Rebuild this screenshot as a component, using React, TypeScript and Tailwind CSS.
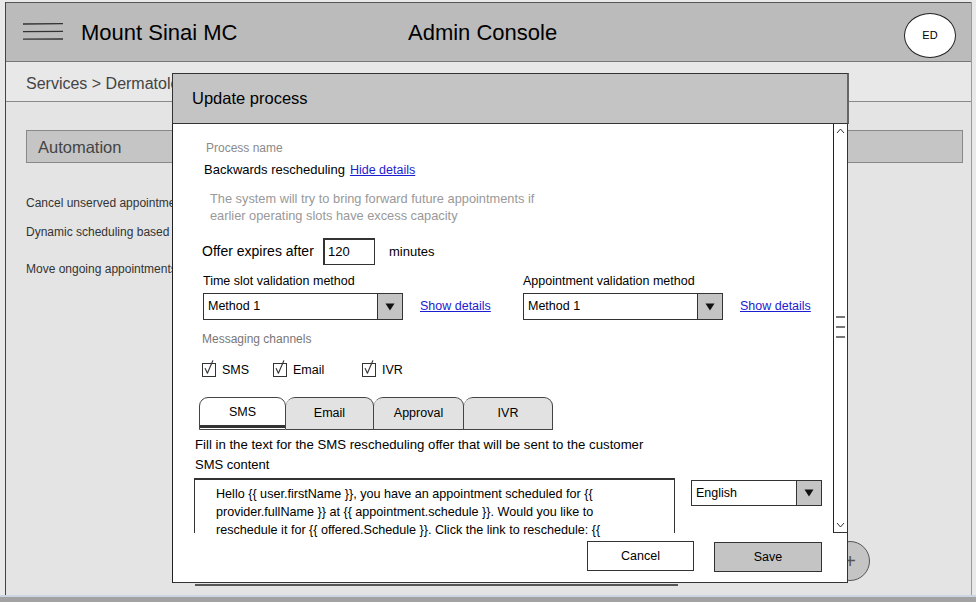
import React from "react";

const Check = () => (
  <svg width="14" height="14" viewBox="0 0 14 14" style={{ overflow: "visible" }} className="shrink-0">
    <rect x="0.5" y="0.5" width="13" height="13" fill="white" stroke="#333" strokeWidth="1" />
    <path d="M3.2 5.5 L5.4 10.2 L10.8 -2.2" fill="none" stroke="#333" strokeWidth="1.1" strokeLinecap="round" strokeLinejoin="round" />
  </svg>
);

const Arrow = () => (
  <svg width="10" height="8" viewBox="0 0 10 8">
    <polygon points="0.5,0.5 9.5,0.5 5,7.5" fill="#111" />
  </svg>
);

export default function App() {
  return (
    <div className="relative w-[976px] h-[602px] overflow-hidden bg-[#e9e9e9] font-[Liberation_Sans,Arial,sans-serif] text-[#222]">
      {/* Frame */}
      <div className="ml-[5px] mt-[2px] w-[967px] h-[593px] flex flex-col border-l border-l-[#444] border-r border-r-[#999]">
        {/* Header */}
        <div className="h-[60px] shrink-0 bg-[#bbbbbb] border-t border-t-[#555] border-b border-b-[#777] flex items-center">
          <svg width="42" height="20" viewBox="0 0 42 20" className="ml-[16px] shrink-0">
            <path d="M1 2 L41 1.6" stroke="#333" strokeWidth="1.3" />
            <path d="M1 9.6 L41 9.4" stroke="#333" strokeWidth="1.3" />
            <path d="M1 17.2 L41 17" stroke="#333" strokeWidth="1.3" />
          </svg>
          <span className="ml-[17px] w-[327px] text-[22px] text-black">Mount Sinai MC</span>
          <span className="text-[22px] text-black">Admin Console</span>
          <div className="ml-auto mr-[15px] self-start mt-[10px] w-[52px] h-[45px] rounded-[50%] bg-white border border-[#222] flex items-center justify-center text-[11px] text-black">
            ED
          </div>
        </div>
        {/* Breadcrumb */}
        <div className="h-[40px] shrink-0 bg-[#e8e8e8] border-b border-b-[#8a8a8a] flex items-center pl-[20px] pt-[5px] text-[16px] text-[#444]">
          Services &gt; Dermatology
        </div>
        {/* Content */}
        <div className="flex-1 bg-[#e4e4e4] pt-[28px] pl-[20px] pr-[8px]">
          <div className="h-[33px] bg-[#c5c5c5] border border-[#888] flex items-center pl-[11px] pt-[2px] text-[16.5px] text-[#444]">
            Automation
          </div>
          <div className="mt-[32px] h-[16px] leading-[16px] text-[12px] text-[#333]">Cancel unserved appointments</div>
          <div className="mt-[13px] h-[16px] leading-[16px] text-[12px] text-[#333]">Dynamic scheduling based on capacity</div>
          <div className="mt-[21px] h-[16px] leading-[16px] text-[12px] text-[#333]">Move ongoing appointments</div>
        </div>
      </div>
      {/* Bottom strip */}
      <div className="h-[2px] bg-[#cdd4e3]" />
      <div className="h-[5px] bg-[#a3a3a3]" />

      {/* Floating + button behind modal */}
      <div className="absolute left-[830px] top-[541px] w-[40px] h-[40px] rounded-full bg-[#c4c4c4] border border-[#555] z-10 flex items-center justify-center text-[20px] text-[#555]">
        +
      </div>
      {/* Background card edge under modal */}
      <div className="absolute left-[195px] top-[584px] w-[483px] h-[2px] bg-[#555] z-10" />

      {/* Modal */}
      <div className="absolute left-[172px] top-[73px] w-[677px] z-20">
        <div className="h-[51px] bg-[#c4c4c4] border border-[#333] border-r-2 border-r-[#666] flex items-center pl-[19px] text-[16.5px] text-black">
          Update process
        </div>
        <div className="w-[676px] h-[459px] bg-white border-l border-l-[#222] border-b border-b-[#333] border-r border-r-[#333] flex flex-col">
          <div className="h-[409px] flex">
            {/* Content column */}
            <div className="w-[660px] min-w-0 shrink-0 flex flex-col">
              <div className="mt-[16px] ml-[33px] h-[16px] leading-[16px] text-[12px] text-[#8a8a8a]">Process name</div>
              <div className="mt-[5px] ml-[31px] h-[18px] flex items-center gap-[5px]">
                <span className="text-[13px] text-black">Backwards rescheduling</span>
                <span className="text-[12.5px] text-[#1c1cd0] underline">Hide details</span>
              </div>
              <div className="mt-[11px] ml-[37px] text-[12.8px] leading-[17px] text-[#999]">
                <div>The system will try to bring forward future appointments if</div>
                <div>earlier operating slots have excess capacity</div>
              </div>
              <div className="mt-[14px] ml-[29px] h-[27px] flex items-center text-[14px] text-black">
                <span className="w-[121px]">Offer expires after</span>
                <div className="w-[52px] h-[27px] border border-[#333] border-t-2 border-l-2 flex items-center pl-[3px] text-[13px]">120</div>
                <span className="ml-[14px] text-[13px]">minutes</span>
              </div>
              <div className="mt-[8px] ml-[30px] h-[16px] grid grid-cols-[320px_300px] text-[12.5px] leading-[16px] text-black">
                <span>Time slot validation method</span>
                <span>Appointment validation method</span>
              </div>
              <div className="mt-[4px] ml-[30px] h-[27px] grid grid-cols-[320px_300px]">
                <div className="flex items-center">
                  <div className="w-[200px] h-[27px] border border-[#333] flex bg-white">
                    <span className="flex-1 flex items-center pl-[4px] text-[12.5px] text-black">Method 1</span>
                    <div className="w-[25px] bg-[#c4c4c4] border-l border-l-[#333] flex items-center justify-center"><Arrow /></div>
                  </div>
                  <span className="ml-[17px] text-[12.5px] text-[#1c1cd0] underline">Show details</span>
                </div>
                <div className="flex items-center">
                  <div className="w-[200px] h-[27px] border border-[#333] flex bg-white">
                    <span className="flex-1 flex items-center pl-[4px] text-[12.5px] text-black">Method 1</span>
                    <div className="w-[25px] bg-[#c4c4c4] border-l border-l-[#333] flex items-center justify-center"><Arrow /></div>
                  </div>
                  <span className="ml-[17px] text-[12.5px] text-[#1c1cd0] underline">Show details</span>
                </div>
              </div>
              <div className="mt-[11px] ml-[29px] h-[16px] leading-[16px] text-[12px] text-[#777]">Messaging channels</div>
              <div className="mt-[14px] ml-[29px] h-[18px] flex items-center text-[12.5px] text-black">
                <Check />
                <span className="ml-[6px] w-[51px]">SMS</span>
                <Check />
                <span className="ml-[6px] w-[69px]">Email</span>
                <Check />
                <span className="ml-[6px]">IVR</span>
              </div>
              <div className="mt-[18px] ml-[26px] h-[34px] flex items-stretch text-[12.5px] text-black">
                <div className="w-[87px] bg-white border border-[#444] rounded-t-[9px] flex flex-col">
                  <div className="flex-1 flex items-center justify-center pt-[2px]">SMS</div>
                  <div className="h-[3px] bg-[#333] mb-[1px]" />
                </div>
                <div className="w-[88px] bg-[#e2e2e2] border border-[#444] border-l-0 rounded-t-[9px] flex items-center justify-center">Email</div>
                <div className="w-[90px] bg-[#e2e2e2] border border-[#444] border-l-0 rounded-t-[9px] flex items-center justify-center">Approval</div>
                <div className="w-[89px] bg-[#e2e2e2] border border-[#444] border-l-0 rounded-t-[9px] flex items-center justify-center">IVR</div>
              </div>
              <div className="mt-[7px] ml-[22px] h-[16px] leading-[16px] text-[13.2px] text-black whitespace-nowrap">
                Fill in the text for the SMS rescheduling offer that will be sent to the customer
              </div>
              <div className="mt-[4px] ml-[22px] h-[16px] leading-[16px] text-[13px] text-black">SMS content</div>
              <div className="mt-[5px] ml-[21px] h-[55px] flex items-start">
                <div className="w-[481px] h-[55px] border-t-2 border-t-[#333] border-l border-l-[#333] border-r border-r-[#333] pl-[21px] pr-[4px] pt-[5px] text-[12.6px] leading-[18px] text-black whitespace-nowrap">
                  <div>Hello {"{{"} user.firstName {"}}"}, you have an appointment scheduled for {"{{"}</div>
                  <div>provider.fullName {"}}"} at {"{{"} appointment.schedule {"}}"}. Would you like to</div>
                  <div>reschedule it for {"{{"} offered.Schedule {"}}"}. Click the link to reschedule: {"{{"}</div>
                </div>
                <div className="ml-[16px] mt-[2px] w-[131px] h-[26px] border border-[#333] flex bg-white">
                  <span className="flex-1 flex items-center pl-[4px] text-[12.5px] text-black">English</span>
                  <div className="w-[25px] bg-[#c4c4c4] border-l border-l-[#333] flex items-center justify-center"><Arrow /></div>
                </div>
              </div>
            </div>
            {/* Scrollbar */}
            <div className="w-[14px] shrink-0 border-l border-l-[#222] border-b border-b-[#333] flex flex-col items-center">
              <svg width="9" height="6" viewBox="0 0 9 6" className="mt-[4px]">
                <polyline points="1,5 4.5,1 8,5" fill="none" stroke="#333" strokeWidth="1" />
              </svg>
              <div className="mt-[182px] w-[9px] h-[2px] bg-[#777]" />
              <div className="mt-[8px] w-[9px] h-[2px] bg-[#777]" />
              <div className="mt-[8px] w-[9px] h-[2px] bg-[#777]" />
              <div className="flex-1" />
              <svg width="9" height="6" viewBox="0 0 9 6" className="mb-[4px]">
                <polyline points="1,1 4.5,5 8,1" fill="none" stroke="#333" strokeWidth="1" />
              </svg>
            </div>
          </div>
          {/* Buttons */}
          <div className="flex-1 flex justify-end items-start pr-[25px] pt-[8px] gap-[20px]">
            <div className="w-[107px] h-[30px] border border-[#333] bg-white flex items-center justify-center text-[12.5px] text-black">Cancel</div>
            <div className="mt-[1px] w-[108px] h-[30px] border border-[#333] bg-[#c4c4c4] flex items-center justify-center text-[12.5px] text-black">Save</div>
          </div>
        </div>
      </div>
    </div>
  );
}
